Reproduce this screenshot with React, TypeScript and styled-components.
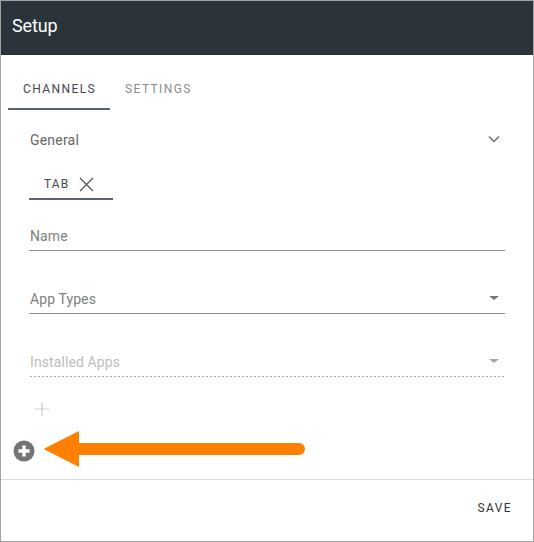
import styled, { createGlobalStyle } from 'styled-components'

const GlobalStyle = createGlobalStyle`
  html, body {
    margin: 0;
    padding: 0;
    background: #fff;
    font-family: Roboto, "Liberation Sans", sans-serif;
  }
`

const Dialog = styled.div`
  position: relative;
  box-sizing: border-box;
  width: 534px;
  height: 542px;
  border: 1px solid #a3a3a3;
  display: flex;
  flex-direction: column;
  background: #fff;
`

const Header = styled.header`
  height: 54px;
  flex: none;
  background: #2b343b;
  color: #fff;
  font-size: 18px;
  letter-spacing: -0.15px;
  line-height: 50px;
  padding-left: 11px;
`

const TabBar = styled.div`
  display: flex;
  margin: 0 0 0 7px;
  height: 55px;
  flex: none;
`

const Tab = styled.div<{ $active?: boolean }>`
  box-sizing: border-box;
  height: 55px;
  padding: 27px 14px 0 15px;
  font-size: 12px;
  line-height: 14px;
  font-weight: 400;
  letter-spacing: 1.4px;
  color: ${p => (p.$active ? '#3f484e' : '#8c8c8c')};
  border-bottom: 2px solid ${p => (p.$active ? '#5b646b' : 'transparent')};
`

const Body = styled.div`
  flex: 1;
  display: flex;
  flex-direction: column;
  padding: 0 28px;
`

const SectionRow = styled.div`
  display: flex;
  align-items: center;
  justify-content: space-between;
  height: 20px;
  margin-top: 20px;
  padding-left: 1px;
  font-size: 14px;
  letter-spacing: 0.2px;
  color: #666;
`

const Chevron = styled.svg`
  width: 12px;
  height: 8px;
  margin-right: 5px;
  margin-top: -2px;
`

const Chip = styled.div`
  box-sizing: border-box;
  width: 84px;
  height: 30px;
  margin-top: 20px;
  padding: 0 0 0 15px;
  display: flex;
  align-items: center;
  gap: 10px;
  font-size: 12px;
  letter-spacing: 1.1px;
  color: #3f484e;
  border-bottom: 2px solid #5b646b;
`

const ChipClose = styled.svg`
  width: 15px;
  height: 15px;
`

const Field = styled.div`
  display: flex;
  align-items: center;
  justify-content: space-between;
  box-sizing: border-box;
  height: 34px;
  padding: 4px 0 0 1px;
  font-size: 14px;
  letter-spacing: 0.1px;
  color: #808080;
  border-bottom: 1px solid #8c8c8c;
  margin-top: 29px;
`

const FirstField = styled(Field)`
  margin-top: 17px;
`

const DisabledField = styled(Field)`
  color: #bcbcbc;
  border-bottom: 1px solid transparent;
  background: repeating-linear-gradient(to right, #ababab 0 2px, transparent 2px 4px) 1px 100% / 100% 1px no-repeat;
  background-origin: border-box;
  background-clip: border-box;
`

const Caret = styled.span<{ $disabled?: boolean }>`
  width: 0;
  height: 0;
  margin: -2px 6px 0 0;
  border-left: 5px solid transparent;
  border-right: 5px solid transparent;
  border-top: 4px solid ${p => (p.$disabled ? '#a6a6a6' : '#757575')};
`

const AddInline = styled.svg`
  width: 14px;
  height: 14px;
  margin: 25px 0 0 6px;
  flex: none;
`

const AddRound = styled.svg`
  width: 22px;
  height: 22px;
  margin: 24px 0 0 -16px;
  flex: none;
`

const Footer = styled.footer`
  margin-top: auto;
  height: 62px;
  flex: none;
  box-sizing: border-box;
  display: flex;
  align-items: center;
  justify-content: flex-end;
  padding: 0 21px 6px 0;
  border-top: 1px solid #dcdcdc;
  font-size: 12px;
  font-weight: 400;
  letter-spacing: 1.4px;
  color: #333;
`

// annotation drawn over the dialog, not part of its layout
const Arrow = styled.svg`
  position: absolute;
  left: 41px;
  top: 428px;
  width: 266px;
  height: 40px;
`

export default function App() {
  return (
    <>
      <GlobalStyle />
      <Dialog>
        <Header>Setup</Header>
        <TabBar>
          <Tab $active>CHANNELS</Tab>
          <Tab>SETTINGS</Tab>
        </TabBar>
        <Body>
          <SectionRow>
            General
            <Chevron viewBox="0 0 12 8">
              <path d="M1 1.5 L6 6.5 L11 1.5" fill="none" stroke="#6f6f6f" strokeWidth="1.5" />
            </Chevron>
          </SectionRow>
          <Chip>
            TAB
            <ChipClose viewBox="0 0 15 15">
              <path d="M1 1 L14 14 M14 1 L1 14" fill="none" stroke="#4a5359" strokeWidth="1.2" />
            </ChipClose>
          </Chip>
          <FirstField>Name</FirstField>
          <Field>
            App Types
            <Caret />
          </Field>
          <DisabledField>
            Installed Apps
            <Caret $disabled />
          </DisabledField>
          <AddInline viewBox="0 0 14 14">
            <path d="M7 0 V14 M0 7 H14" fill="none" stroke="#cfcfcf" strokeWidth="1.2" />
          </AddInline>
          <AddRound viewBox="0 0 22 22">
            <circle cx="11" cy="11" r="10.5" fill="#757575" />
            <path d="M11 5.5 V16.5 M5.5 11 H16.5" fill="none" stroke="#fff" strokeWidth="3.4" />
          </AddRound>
        </Body>
        <Footer>SAVE</Footer>
        <Arrow viewBox="0 0 266 40">
          <path d="M1.5 20 L37 2 V14 H257 A6 6 0 0 1 257 26 H37 V38 Z" fill="#ff8000" />
        </Arrow>
      </Dialog>
    </>
  )
}
